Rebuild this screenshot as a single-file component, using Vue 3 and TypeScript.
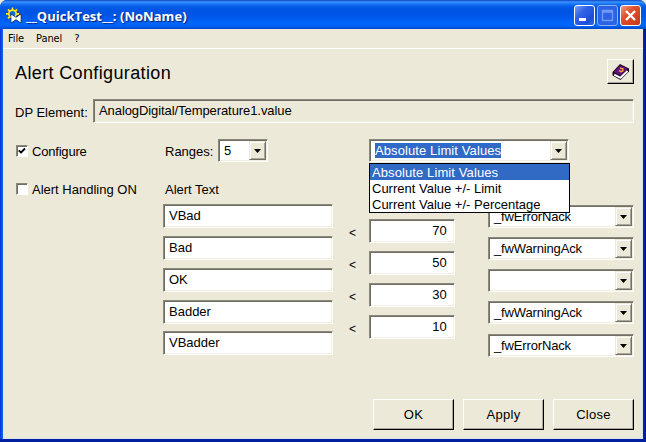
<script setup lang="ts">
import { ref } from 'vue'

const title = '__QuickTest__: (NoName)'
const menus = ['File', 'Panel', '?']
const modes = ['Absolute Limit Values', 'Current Value +/- Limit', 'Current Value +/- Percentage']
const selected = ref(0)
const configure = ref(true)
const handling = ref(false)
const alertTexts = ref(['VBad', 'Bad', 'OK', 'Badder', 'VBadder'])
const limits = ref([70, 50, 30, 10])
const classes = ['_fwErrorNack', '_fwWarningAck', '', '_fwWarningAck', '_fwErrorNack']
const actions = ['OK', 'Apply', 'Close']
</script>

<template>
  <div class="window">
    <header class="titlebar">
      <svg class="app-icon" width="16" height="16" viewBox="0 0 16 16">
        <circle cx="6.500" cy="6.800" r="5.200" fill="#1a2f6e" />
        <path d="M6.500 .5v3M2 2.300l2 2M11 2.300l-2 2M0 6.800h3M10 6.800h3M2 11.300l2-2M6.500 10v3" stroke="#ffe92b" stroke-width="1.700" />
        <circle cx="6.500" cy="6.800" r="3.700" fill="#1767d8" stroke="#ffe92b" stroke-width="1.700" />
        <path d="M5.300 7.500l4.700 3.200 4.700-3.200v8L10 12.300 5.300 15.500z" fill="#fff" stroke="#101a3c" stroke-width="1.200" paint-order="stroke" />
      </svg>
      <h1 class="title">{{ title }}</h1>
      <div class="captions">
        <button class="cap" aria-label="Minimize">
          <svg width="19" height="19"><rect x="4" y="12" width="7" height="3" fill="#fff" /></svg>
        </button>
        <button class="cap off" aria-label="Maximize">
          <svg width="19" height="19"><path d="M4.500 4.500h10v10h-10zM4 6h11" fill="none" stroke="#6f9bf5" stroke-width="1.400" /></svg>
        </button>
        <button class="cap close" aria-label="Close">
          <svg width="19" height="19"><path d="M5 5l9 9M14 5l-9 9" stroke="#fff" stroke-width="2.300" /></svg>
        </button>
      </div>
    </header>

    <nav class="menubar">
      <span v-for="m in menus" :key="m" class="menu">{{ m }}</span>
    </nav>

    <main class="panel">
      <div class="head">
        <h2 class="heading">Alert Configuration</h2>
        <button class="raised book" aria-label="Help">
          <svg width="18" height="18" viewBox="0 0 18 18">
            <path d="M0.500 9L8 1l9 4.500v3L8.500 17 .5 12.500z" fill="#1b0920" />
            <path d="M2.200 11.700l6.300 3.100L15.500 8" fill="none" stroke="#fff" stroke-width="1.900" />
            <path d="M1.800 9L8 2.200l7.500 3.500L8.500 12.500z" fill="#64107b" />
            <path d="M8 5.200l2.800.6v2L8.500 9M7 7.500l1.500.8" fill="none" stroke="#f5a03a" stroke-width="1.500" />
          </svg>
        </button>
      </div>

      <div class="dp">
        <span class="dp-label">DP Element:</span>
        <div class="sunken readonly">AnalogDigital/Temperature1.value</div>
      </div>

      <div class="options">
        <label class="check" @click="configure = !configure">
          <span class="box">
            <svg v-if="configure" width="8" height="8" viewBox="0 0 8 8"><path d="M.7 3.300L3 5.500 7 1.500" fill="none" stroke="#000" stroke-width="1.800" /></svg>
          </span>
          <span class="check-text tight">Configure</span>
        </label>
        <span class="ranges">Ranges:</span>
        <div class="sunken combo small">
          <span class="value">5</span>
          <span class="arrow"><svg width="7" height="4"><path d="M0 0h7L3.500 4z" /></svg></span>
        </div>
        <div class="mode">
          <div class="sunken combo">
            <span class="value"><mark class="marked">{{ modes[selected] }}</mark></span>
            <span class="arrow"><svg width="7" height="4"><path d="M0 0h7L3.500 4z" /></svg></span>
          </div>
          <ul class="list">
            <li v-for="(m, i) in modes" :key="m" :class="['item', { active: i === selected }]" @click="selected = i">{{ m }}</li>
          </ul>
        </div>
      </div>

      <div class="labels">
        <label class="check" @click="handling = !handling">
          <span class="box">
            <svg v-if="handling" width="8" height="8" viewBox="0 0 8 8"><path d="M.7 3.300L3 5.500 7 1.500" fill="none" stroke="#000" stroke-width="1.800" /></svg>
          </span>
          <span class="check-text">Alert Handling ON</span>
        </label>
        <span class="alert-text">Alert Text</span>
      </div>

      <div class="grid">
        <div class="texts">
          <div v-for="(t, i) in alertTexts" :key="i" class="sunken field">{{ t }}</div>
        </div>
        <div class="limits">
          <div v-for="n in limits" :key="n" class="limit">
            <span class="lt">&lt;</span>
            <div class="sunken number">{{ n }}</div>
          </div>
        </div>
        <div class="classes">
          <div v-for="(c, i) in classes" :key="i" class="sunken combo">
            <span class="value">{{ c }}</span>
            <span class="arrow"><svg width="7" height="4"><path d="M0 0h7L3.500 4z" /></svg></span>
          </div>
        </div>
      </div>

      <footer class="actions">
        <button v-for="a in actions" :key="a" class="raised action">{{ a }}</button>
      </footer>
    </main>
  </div>
</template>

<style>
body { background: #ece9d8; }
</style>

<style scoped>
* { box-sizing: border-box; }
.window {
  width: 646px;
  height: 442px;
  padding: 0 3px;
  display: flex;
  flex-direction: column;
  background: linear-gradient(90deg, #0831d9 0, #166aee 3px, #0046d5 640px, #00138c 646px);
  border-bottom: 3px solid #00209f;
  border-radius: 7px 7px 0 0;
  font: 13px/16px "Liberation Sans", Arial, sans-serif;
  letter-spacing: 0;
  color: #000;
  overflow: hidden;
}
button { font: inherit; letter-spacing: inherit; padding: 0; color: #000; }
.titlebar {
  height: 29px;
  flex: none;
  margin: 0 -3px;
  padding: 1px 5px 0 6px;
  display: flex;
  align-items: center;
  background: linear-gradient(180deg, #0b45c2 0, #3c93ff 2px, #1773f5 4px, #0459e6 7px, #0054e3 12px, #0059ee 18px, #0066fb 23px, #0065f6 26px, #0046c8 29px);
}
.app-icon { flex: none; }
.title {
  margin: 1px 0 0 4px;
  flex: 1;
  color: #fff;
  font: bold 13px/20px "Open Sans", "Noto Sans", sans-serif;
  letter-spacing: 0.04px;
  text-shadow: 1px 1px 1px #0a1f7a;
  white-space: nowrap;
}
.captions { display: flex; gap: 2px; margin-top: 1px; }
.cap {
  width: 21px;
  height: 21px;
  border: 1px solid #fff;
  border-radius: 3px;
  background: linear-gradient(135deg, #7d9ff5, #2f62e6 35%, #1c4fd8 75%, #2a6cf0);
  display: grid;
  place-items: center;
}
.cap.off { border-color: #8cb0f5; background: #2d62e4; }
.cap.close { background: linear-gradient(135deg, #f0997f, #dd4f2c 40%, #c83a17); }
.menubar {
  height: 20px;
  flex: none;
  padding: 0 0 0 5px;
  display: flex;
  gap: 12px;
  background: #ece9d8;
  border-bottom: 1px solid #fff;
  font: 11px/19px "DejaVu Sans Condensed", "Noto Sans", sans-serif;
  letter-spacing: -0.1px;
}
.panel {
  flex: 1;
  background: #ece9d8;
  border-left: 1px solid #dbe6ee;
  border-right: 1px solid #d8e0ee;
  border-bottom: 1px solid #d8e0ee;
  padding: 10px 8px 0 11px;
}
.head { height: 26px; display: flex; justify-content: space-between; }
.heading { margin: 0; font-size: 18px; line-height: 28px; font-weight: normal; letter-spacing: 0.37px; }
.raised {
  border: 1px solid;
  border-color: #fff #000 #000 #fff;
  box-shadow: inset -1px -1px #aca899;
  background: #ece9d8;
}
.book { width: 27px; height: 25px; display: grid; place-items: center; }
.sunken {
  height: 24px;
  border: 1px solid;
  border-color: #8a877b #fff #fff #8a877b;
  box-shadow: inset 1px 1px #716f64, inset -1px -1px #f1efe2;
  background: #fff;
}
.dp { margin-top: 14px; height: 24px; display: flex; }
.dp-label { width: 78px; line-height: 27px; }
.readonly { flex: 1; background: #ece9d8; padding-left: 5px; line-height: 21px; letter-spacing: -0.08px; }
.options { margin-top: 16px; height: 24px; display: flex; }
.check { display: flex; align-items: center; width: 150px; }
.check-text { margin-top: 2px; }
.tight { letter-spacing: -0.2px; }
.box {
  width: 12px;
  height: 12px;
  margin: 0 4px 0 1px;
  border: 1px solid;
  border-color: #8a877b #fff #fff #8a877b;
  box-shadow: inset 1px 1px #716f64;
  background: #fff;
  display: grid;
  place-items: center;
}
.ranges { width: 53px; line-height: 26px; }
.combo { display: flex; padding: 1px; height: 23px; }
.combo .value { flex: 1; padding-left: 4px; line-height: 19px; white-space: nowrap; }
.small { width: 50px; }
.arrow {
  width: 17px;
  border: 1px solid;
  border-color: #ece9d8 #716f64 #716f64 #ece9d8;
  box-shadow: inset 1px 1px #fff, inset -1px -1px #aca899;
  background: #ece9d8;
  display: grid;
  place-items: center;
}
.mode { position: relative; width: 200px; margin-left: 101px; }
.marked { background: #316ac5; color: #fff; padding: 0; letter-spacing: 0.1px; }
.list {
  position: absolute;
  left: 0;
  top: 24px;
  width: 201px;
  height: 50px;
  margin: 0;
  padding: 0;
  list-style: none;
  background: #fff;
  border: 1px solid #000;
}
.item { height: 16px; padding-left: 2px; line-height: 18px; white-space: nowrap; }
.active { background: #316ac5; color: #fff; letter-spacing: 0.1px; }
.labels { margin-top: 18px; height: 16px; display: flex; }
.alert-text { line-height: 18px; }
.grid { margin-top: 7px; height: 154px; display: flex; padding-left: 148px; }
.texts { display: flex; flex-direction: column; gap: 8px; width: 170px; }
.field { padding-left: 5px; line-height: 21px; flex: none; }
.field:last-child { margin-top: -1px; }
.limits { display: flex; flex-direction: column; gap: 8px; margin: 15px 0 0 16px; width: 106px; }
.limit { display: flex; height: 24px; }
.lt { width: 20px; font-size: 12px; line-height: 28px; }
.number { width: 86px; padding-right: 7px; text-align: right; line-height: 21px; letter-spacing: 0.2px; }
.classes { display: flex; flex-direction: column; gap: 9px; margin: 1px 0 0 33px; width: 146px; letter-spacing: -0.15px; }
.classes .combo { flex: none; }
.classes .combo:last-child { margin-top: 1px; }
.actions { display: flex; justify-content: flex-end; gap: 9px; margin-top: 41px; letter-spacing: 0.3px; }
.action { width: 81px; height: 31px; }
</style>
